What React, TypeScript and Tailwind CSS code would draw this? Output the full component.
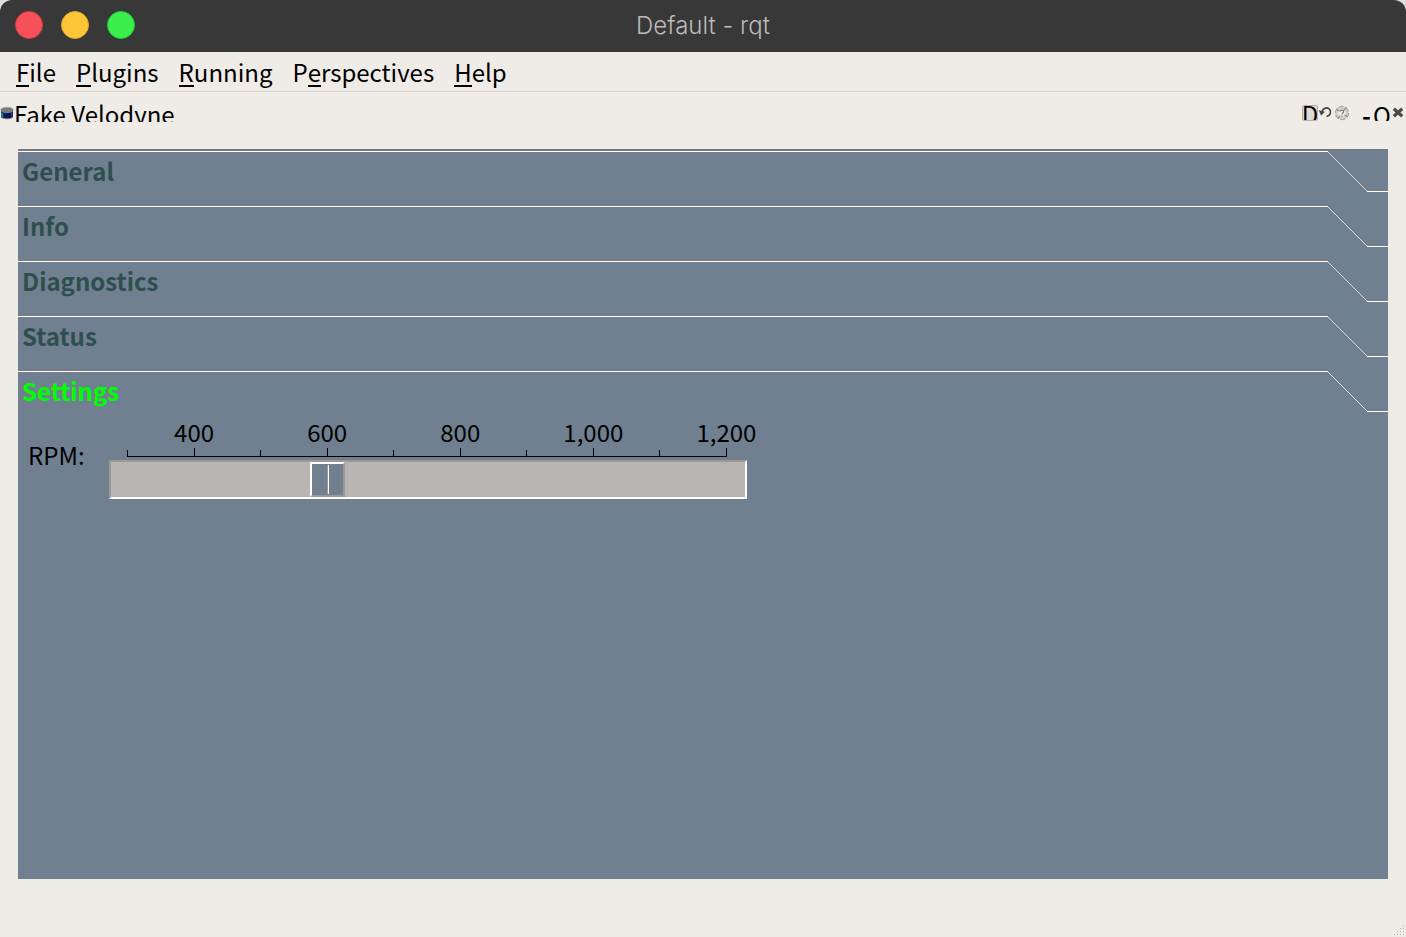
import { useState } from "react";

const menus = [
  { before: "", key: "F", after: "ile" },
  { before: "", key: "P", after: "lugins" },
  { before: "", key: "R", after: "unning" },
  { before: "P", key: "e", after: "rspectives" },
  { before: "", key: "H", after: "elp" },
];

const sections = ["General", "Info", "Diagnostics", "Status", "Settings"];

const ticks = [
  { label: "", major: false },
  { label: "400", major: true },
  { label: "", major: false },
  { label: "600", major: true },
  { label: "", major: false },
  { label: "800", major: true },
  { label: "", major: false },
  { label: "1,000", major: true },
  { label: "", major: false },
  { label: "1,200", major: true },
];

function TitleBar() {
  return (
    <header className="grid h-[52px] grid-cols-[1fr_auto_1fr] items-start rounded-t-[12px] bg-[#383838] px-[15px]">
      <div className="flex gap-[18px] pt-[11px]">
        <button aria-label="Close window" className="size-7 rounded-full border border-[#df3a45] bg-[#f65058]" />
        <button aria-label="Minimize window" className="size-7 rounded-full border border-[#e0a92a] bg-[#fbc638]" />
        <button aria-label="Maximize window" className="size-7 rounded-full border border-[#1fcf36] bg-[#3bee4c]" />
      </div>
      <h1 className="pt-[10px] font-[Inter,sans-serif] text-2xl leading-8 font-light text-[#bcbab8]">Default - rqt</h1>
    </header>
  );
}

function MenuBar() {
  return (
    <nav className="flex h-10 items-start gap-5 border-b border-[#d5d1cb] px-4 pt-1">
      {menus.map((m) => (
        <button key={m.key} className="flex leading-8">
          {m.before}
          <span className="h-[31px] border-b-2 border-black">{m.key}</span>
          {m.after}
        </button>
      ))}
    </nav>
  );
}

function SensorIcon() {
  return (
    <svg viewBox="0 0 14 14" className="size-[14px]" aria-hidden="true">
      <path d="M1 9v2c0 3 12 3 12 0V9z" fill="#8b8b8b" />
      <path d="M1 4v6c0 3 12 3 12 0V4z" fill="#0b1450" />
      <path d="M1 6.500v3c.6 1 1.500 1.500 2.500 1.800V7.500z" fill="#16808a" />
      <path d="M11 7v4l1.500-.8V6.500z" fill="#1c3fae" />
      <ellipse cx="7" cy="4" rx="6.300" ry="2.700" fill="#77797a" stroke="#a5a5a5" strokeWidth=".6" />
    </svg>
  );
}

function DockBar() {
  return (
    <div className="flex h-[30px] items-start justify-between overflow-hidden pr-0.5">
      <div className="flex items-start">
        <span className="pt-[14px]">
          <SensorIcon />
        </span>
        <h2 className="pt-1.5 leading-8">Fake Velodyne</h2>
      </div>
      <div className="flex items-start pt-[13px]">
        <button aria-label="Dock" className="flex h-4 w-4 items-start justify-center overflow-hidden rounded-xs border border-[#b5b2ae] bg-[#dedbd7]">
          <span className="-mt-2 leading-8">D</span>
        </button>
        <button aria-label="Reload" className="w-4">
          <svg viewBox="0 0 16 16" className="size-4" fill="none" stroke="#454545" strokeWidth="1.700">
            <path d="M4 6.500C5 2.800 9.500 1.800 11.500 4.200c2.200 2.800 1 6.500-3 7.300" />
            <path d="M.8 5.200L7 6.800 3 10.500z" fill="#454545" stroke="none" />
          </svg>
        </button>
        <button aria-label="Help" className="w-4">
          <svg viewBox="0 0 16 16" className="size-4" fill="none">
            <circle cx="8" cy="8" r="5.300" stroke="#cfcdca" strokeWidth="3" />
            <circle cx="8" cy="8" r="6.700" stroke="#858585" strokeWidth=".7" strokeDasharray="5 2" />
            <path d="M2.500 4.500l3 1.500M12 2.500l-2 3M4 13.500l2-3M13.500 11.500l-3-1.500" stroke="#777" />
            <path d="M6.300 6.400C6.500 4.500 10 4.700 9.600 6.700 9.400 7.800 8 7.800 8 9.200M8 10.300v1.300" stroke="#777" strokeWidth="1.200" />
          </svg>
        </button>
        <button aria-label="Minimize" className="ml-3 h-4 w-2 overflow-hidden">
          <span className="-mt-1.5 block leading-8 font-bold">-</span>
        </button>
        <button aria-label="Undock" className="ml-1 flex h-4 w-4 items-start justify-center overflow-hidden">
          <span className="-mt-1.5 leading-8">O</span>
        </button>
        <button aria-label="Close" className="ml-0.5 w-3">
          <svg viewBox="0 0 12 16" className="h-4 w-3" stroke="#4a4a4a" strokeWidth="3.200">
            <path d="M1.800 3.800l8.400 7.400M10.200 3.800l-8.400 7.400" />
          </svg>
        </button>
      </div>
    </div>
  );
}

function SectionTab({ label, active, onSelect }: { label: string; active: boolean; onSelect: () => void }) {
  return (
    <button onClick={onSelect} aria-expanded={active} className="flex h-[55px] w-full items-start text-left font-bold">
      <span
        className={
          "flex-1 border-t border-[#80787a] " + (active ? "text-[#00ff00]" : "text-[#2f4f4f]")
        }
      >
        <span className="block border-t border-white pl-1 leading-[38px]">{label}</span>
      </span>
      <svg viewBox="0 0 60 42" className="h-[42px] w-[60px]" fill="none" shapeRendering="crispEdges" aria-hidden="true">
        <path d="M0 0L40.500 40.500" stroke="#80787a" strokeWidth=".7" />
        <path d="M39 40.500H60" stroke="#80787a" />
        <path d="M-1 1L39.500 41.500" stroke="#fff" strokeWidth=".7" />
        <path d="M39 41.500H60" stroke="#fff" />
      </svg>
    </button>
  );
}

function RpmSetting() {
  const [rpm, setRpm] = useState(600);
  return (
    <div className="flex items-start pl-[10px]">
      <label htmlFor="rpm" className="w-[81px] pt-[22px] leading-8">
        RPM:
      </label>
      <div className="w-[638px]">
        <div className="mr-5 ml-[18px] flex h-10 items-end justify-between border-b border-black" aria-hidden="true">
          {ticks.map((t, i) => (
            <span key={i} className="flex w-px flex-col items-center">
              <span className="leading-8 whitespace-nowrap">{t.label}</span>
              <span className={"w-px bg-black " + (t.major ? "h-2" : "h-1.5")} />
            </span>
          ))}
        </div>
        <input
          id="rpm"
          type="range"
          min={300}
          max={1200}
          value={rpm}
          onChange={(e) => setRpm(Number(e.target.value))}
          className="mt-[3px] block h-[39px] w-full appearance-none border-2 border-t-[#9b9896] border-r-white border-b-white border-l-[#9b9896] bg-[#b8b4b1] pr-[3px] [&::-webkit-slider-thumb]:h-[35px] [&::-webkit-slider-thumb]:w-[35px] [&::-webkit-slider-thumb]:appearance-none [&::-webkit-slider-thumb]:border-2 [&::-webkit-slider-thumb]:border-t-white [&::-webkit-slider-thumb]:border-r-[#9b9896] [&::-webkit-slider-thumb]:border-b-[#9b9896] [&::-webkit-slider-thumb]:border-l-white [&::-webkit-slider-thumb]:bg-[#708090] [&::-webkit-slider-thumb]:bg-[linear-gradient(90deg,#9b9896_1px,#fff_1px)] [&::-webkit-slider-thumb]:bg-[length:2px_29px] [&::-webkit-slider-thumb]:bg-[position:15px_1px] [&::-webkit-slider-thumb]:bg-no-repeat"
        />
      </div>
    </div>
  );
}

function ResizeGrip() {
  return (
    <svg viewBox="0 0 12 12" className="size-3" fill="#b8b4b0" aria-hidden="true">
      {[
        [9, 0],
        [6, 3],
        [9, 3],
        [3, 6],
        [6, 6],
        [9, 6],
        [0, 9],
        [3, 9],
        [6, 9],
        [9, 9],
      ].map(([x, y]) => (
        <rect key={x + "-" + y} x={x} y={y} width="1" height="1" />
      ))}
    </svg>
  );
}

export default function App() {
  const [active, setActive] = useState("Settings");
  return (
    <div className="min-h-screen bg-[#dedede]">
      <div className="flex min-h-screen flex-col rounded-t-[12px] bg-[#efebe7] font-['Noto_Sans_CJK_SC','Noto_Sans',sans-serif] text-2xl font-normal text-black">
        <TitleBar />
        <MenuBar />
        <DockBar />
        <main className="mx-[18px] mt-[27px] flex-1 border-t border-[#737880] bg-[#708090]">
          {sections.map((s) => (
            <SectionTab key={s} label={s} active={s === active} onSelect={() => setActive(s)} />
          ))}
          <div className="-mt-2">
            <RpmSetting />
          </div>
        </main>
        <footer className="flex h-[58px] items-end justify-end">
          <ResizeGrip />
        </footer>
      </div>
    </div>
  );
}
